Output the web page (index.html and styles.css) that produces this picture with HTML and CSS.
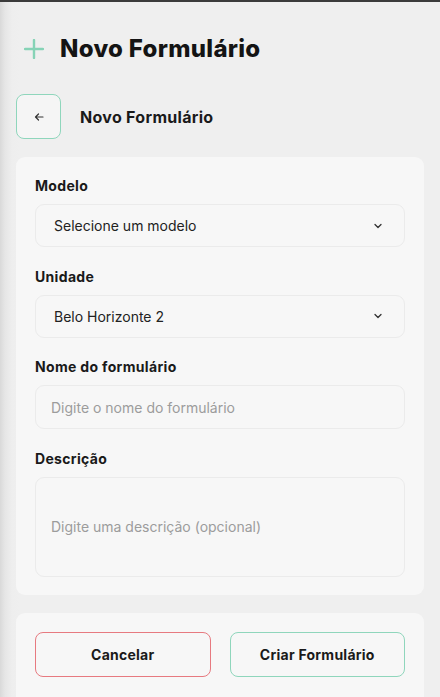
FILE: index.html
```html
<!DOCTYPE html>
<html lang="pt-BR">
<head>
<meta charset="utf-8">
<title>Novo Formulário</title>
<link rel="stylesheet" href="styles.css">
</head>
<body>
<div class="topline"></div>
<main class="page">
  <header class="page-header">
    <svg class="plus" width="20" height="20" viewBox="0 0 20 20" aria-hidden="true">
      <path d="M10 1v18M1 10h18" stroke="#86d3b6" stroke-width="2.4" stroke-linecap="round" fill="none"/>
    </svg>
    <h1 class="title">Novo Formulário</h1>
  </header>

  <div class="subheader">
    <button class="back-btn" type="button" aria-label="Voltar">
      <svg width="10" height="10" viewBox="0 0 10 10" aria-hidden="true">
        <path d="M9 5H1.5M4.5 2L1.5 5l3 3" stroke="#333" stroke-width="1.2" stroke-linecap="round" stroke-linejoin="round" fill="none"/>
      </svg>
    </button>
    <h2 class="subtitle">Novo Formulário</h2>
  </div>

  <section class="card form-card">
    <div class="field">
      <label class="label">Modelo</label>
      <div class="control select">
        <span class="value">Selecione um modelo</span>
        <svg class="chev" width="10" height="6" viewBox="0 0 10 6" aria-hidden="true">
          <path d="M2 1.5l3 3 3-3" stroke="#333" stroke-width="1.3" stroke-linecap="round" stroke-linejoin="round" fill="none"/>
        </svg>
      </div>
    </div>
    <div class="field">
      <label class="label">Unidade</label>
      <div class="control select">
        <span class="value">Belo Horizonte 2</span>
        <svg class="chev" width="10" height="6" viewBox="0 0 10 6" aria-hidden="true">
          <path d="M2 1.5l3 3 3-3" stroke="#333" stroke-width="1.3" stroke-linecap="round" stroke-linejoin="round" fill="none"/>
        </svg>
      </div>
    </div>
    <div class="field">
      <label class="label">Nome do formulário</label>
      <div class="control input">
        <span class="placeholder">Digite o nome do formulário</span>
      </div>
    </div>
    <div class="field">
      <label class="label">Descrição</label>
      <div class="control textarea">
        <span class="placeholder">Digite uma descrição (opcional)</span>
      </div>
    </div>
  </section>

  <section class="card actions">
    <button class="btn btn-cancel" type="button">Cancelar</button>
    <button class="btn btn-create" type="button">Criar Formulário</button>
  </section>
</main>
</body>
</html>
```

FILE: styles.css
```css
* { box-sizing: border-box; }
html, body { margin: 0; padding: 0; }
body {
  width: 440px;
  height: 697px;
  overflow: hidden;
  font-family: "Inter", "Noto Sans", sans-serif;
  color: #1b1b1b;
  background: linear-gradient(to right, #d9d9d9 0px, #e6e6e6 5px, #eeeeee 12px, #efefef 20px);
}
.topline {
  height: 2px;
  background: #3b3b3b;
}
.page {
  padding: 0 16px;
}
.page-header {
  display: flex;
  align-items: center;
  gap: 16px;
  padding: 2px 0 0 8px;
  height: 92px;
}
.plus { flex: none; }
.title {
  margin: 0;
  font-size: 24px;
  font-weight: 800;
  letter-spacing: 0.3px;
  line-height: 30px;
  color: #141414;
}
.subheader {
  display: flex;
  align-items: center;
  gap: 19px;
  height: 45px;
}
.back-btn {
  width: 45px;
  height: 45px;
  border: 1.5px solid #8fd6bc;
  border-radius: 8px;
  background: #f5f5f5;
  display: flex;
  align-items: center;
  justify-content: center;
  padding: 0;
}
.subtitle {
  margin: 0;
  font-size: 16px;
  font-weight: 700;
  letter-spacing: 0.3px;
  color: #1a1a1a;
}
.card {
  background: #f7f7f7;
  border-radius: 9px;
  padding: 19px;
}
.form-card {
  margin-top: 18px;
  display: flex;
  flex-direction: column;
  gap: 19.5px;
  height: 438px;
}
.field {
  display: flex;
  flex-direction: column;
  gap: 8px;
}
.label {
  font-size: 14px;
  font-weight: 700;
  letter-spacing: 0.33px;
  line-height: 20px;
  height: 20px;
  color: #1a1a1a;
}
.control {
  border: 1px solid #ebebeb;
  border-radius: 9px;
  background: #f7f7f7;
  display: flex;
  align-items: center;
}
.select {
  height: 43px;
  padding: 0 19px 0 18px;
  justify-content: space-between;
}
.value {
  font-size: 14px;
  color: #222;
}
.chev { margin-right: 2px; }
.input {
  height: 44px;
  padding: 0 15px;
}
.textarea {
  height: 100px;
  padding: 0 15px;
}
.placeholder {
  font-size: 14px;
  color: #9c9c9c;
}
.actions {
  margin-top: 18px;
  display: flex;
  gap: 19px;
  height: 110px;
  align-items: flex-start;
}
.btn {
  flex: 1;
  height: 45px;
  border-radius: 8px;
  background: #f7f7f7;
  font-family: inherit;
  font-size: 14px;
  font-weight: 700;
  letter-spacing: 0.25px;
  color: #1a1a1a;
  padding: 0;
}
.btn-cancel { border: 1.5px solid #e77a80; }
.btn-create { border: 1.5px solid #8fd6bc; }
```
